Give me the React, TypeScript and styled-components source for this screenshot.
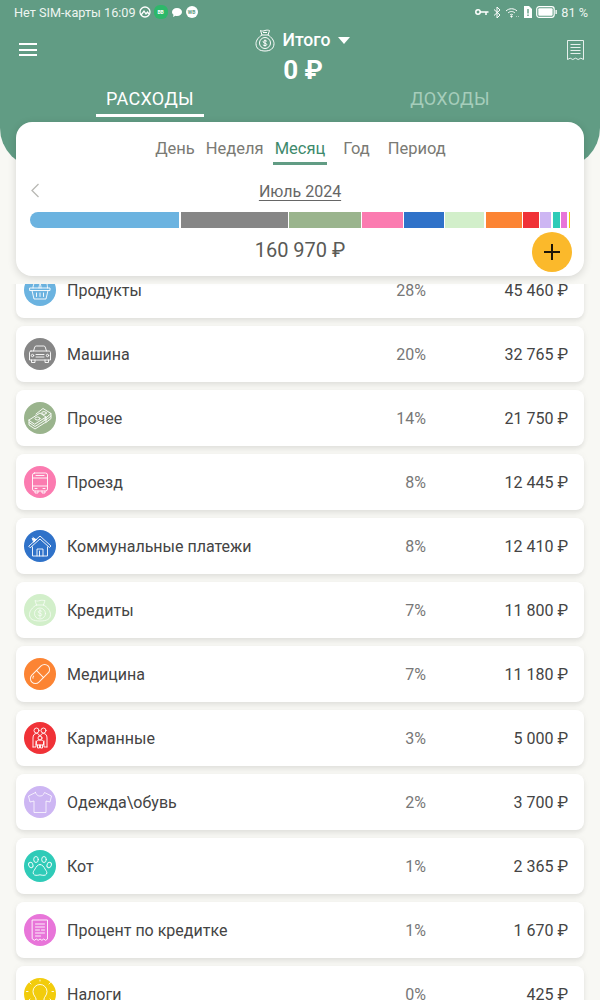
import React from "react";
import styled, { createGlobalStyle } from "styled-components";

const Global = createGlobalStyle`
  html, body { margin: 0; padding: 0; background: #f8f8f4; }
  * { box-sizing: border-box; }
  body { font-family: Roboto, "Noto Sans", sans-serif; }
`;

const Page = styled.div`
  width: 600px; height: 1000px; overflow: hidden; display: flex; flex-direction: column;
  background: #f8f8f4; color: #444;
`;
const Header = styled.header`
  height: 168px; flex: none; background: #619c84; color: #fff;
  border-radius: 0 0 40px 40px; display: flex; flex-direction: column;
`;
const StatusBar = styled.div`
  height: 24px; padding: 0 12px 0 14px; display: flex; align-items: center; justify-content: space-between;
  font-size: 12.7px; color: #eef5f1;
`;
const StatusGroup = styled.div<{ $gap: number }>`
  display: flex; align-items: center; gap: ${p => p.$gap}px; white-space: nowrap;
`;
const Pill = styled.span<{ $bg: string; $w: number; $h: number; $color: string }>`
  width: ${p => p.$w}px; height: ${p => p.$h}px; border-radius: 6px; background: ${p => p.$bg}; color: ${p => p.$color};
  font-size: 5px; font-weight: 700; display: inline-flex; align-items: center; justify-content: center;
`;
const TopRow = styled.div`
  display: flex; justify-content: space-between; align-items: flex-start; padding: 2px 16px 0 19px; height: 60px;
`;
const MenuBtn = styled.div`
  width: 18px; margin-top: 17px; display: flex; flex-direction: column; gap: 3.5px;
`;
const MenuLine = styled.span`
  display: block; height: 2px; background: #fff;
`;
const Center = styled.div`
  display: flex; flex-direction: column; align-items: center; margin-left: 1px;
`;
const TitleRow = styled.div`
  display: flex; align-items: center; height: 27px; gap: 7px; font-size: 17.6px; font-weight: 500;
`;
const Caret = styled.span`
  width: 0; height: 0; border-left: 6px solid transparent; border-right: 6px solid transparent; border-top: 7px solid #fff; margin-top: 1px;
`;
const Balance = styled.div`
  font-size: 26px; font-weight: 700; height: 33px; line-height: 34px; margin-left: 1px;
`;
const Tabs = styled.div`
  display: grid; grid-template-columns: 1fr 1fr; height: 34px; margin-top: -1px;
`;
const Tab = styled.div<{ $on?: boolean }>`
  justify-self: center; width: 108px; height: 34px; padding-top: 4px; text-align: center; font-size: 18px; line-height: 24px;
  color: ${p => (p.$on ? "#fff" : "#a6cdbb")}; letter-spacing: .3px;
  border-bottom: 3px solid ${p => (p.$on ? "#fff" : "transparent")};
`;

const Card = styled.section`
  position: relative; flex: none; height: 154px; margin: -46px 16px 0; background: #fff; border-radius: 16px;
  box-shadow: 0 2px 8px rgba(0,0,0,.14); padding-top: 15px; display: flex; flex-direction: column; align-items: stretch; z-index: 2;
`;
const Periods = styled.div`
  display: flex; justify-content: center; height: 28px; padding-left: 1px;
`;
const Period = styled.div<{ $on?: boolean; $m: number }>`
  font-size: 16.5px; line-height: 24px; padding: 0 2px; margin-left: ${p => p.$m}px;
  color: ${p => (p.$on ? "#3e8a6c" : "#7a7a74")};
  border-bottom: 3px solid ${p => (p.$on ? "#619c84" : "transparent")};
`;
const DateRow = styled.div`
  display: flex; align-items: center; justify-content: center; position: relative; height: 24px; margin-top: 14px;
`;
const Chevron = styled.svg`
  position: absolute; left: 15px; top: 4px;
`;
const DateText = styled.span`
  font-size: 16px; color: #666; text-decoration: underline; text-underline-offset: 3px; text-decoration-thickness: 1px;
`;
const Bar = styled.div`
  display: flex; gap: 1.2px; height: 16px; margin: 9px 14px 0; border-radius: 8px 0 0 8px; overflow: hidden;
`;
const Seg = styled.div<{ $c: string; $g: number }>`
  flex: ${p => p.$g} 0 0; background: ${p => p.$c};
`;
const Total = styled.div`
  text-align: center; font-size: 20px; line-height: 24px; color: #5a5a56; margin-top: 10px;
`;
const Fab = styled.div`
  position: absolute; right: 12px; bottom: 4px; width: 40px; height: 40px; border-radius: 50%; background: #fbb92b;
  display: flex; align-items: center; justify-content: center;
`;
const ListViewport = styled.div`
  flex: 1; margin-top: 8px; overflow: hidden; padding: 0 16px;
`;
const List = styled.div`
  margin-top: -22px; display: flex; flex-direction: column; gap: 8px;
`;
const Row = styled.div`
  flex: none; height: 56px; background: #fff; border-radius: 8px; box-shadow: 0 3px 4px rgba(0,0,0,.08), 0 0 8px rgba(0,0,0,.03);
  display: flex; align-items: center; padding: 0 16px 0 8px; font-size: 16px; color: #444;
`;
const Badge = styled.div<{ $bg: string }>`
  width: 32px; height: 32px; flex: none; border-radius: 50%; background: ${p => p.$bg};
`;
const Name = styled.div`
  flex: 1; margin-left: 11px; white-space: nowrap;
`;
const Pct = styled.div`
  color: #777; text-align: right;
`;
const AmountCell = styled.div`
  width: 142px; text-align: right; white-space: nowrap;
`;
const Line = styled.svg`
  display: block;
`;

const G: React.FC<{ children: React.ReactNode; o?: number }> = ({ children, o = 0.9 }) => (
  <Line width="32" height="32" viewBox="0 0 32 32" fill="none" stroke="#fff" strokeOpacity={o} strokeWidth="1" strokeLinecap="round" strokeLinejoin="round">
    {children}
  </Line>
);

const icons: Record<string, React.ReactNode> = {
  basket: <G><path d="M6 14h20v2.500H6zM8 16.500l2 8.500h12l2-8.500M12.500 19v3.500M16 19v3.500M19.500 19v3.500M9 14c0-5 3-7 4.500-7S17 9 17 14M15 14c0-4 2.500-7 5-7s3.500 3 3.500 7" /></G>,
  car: <G><path d="M9.500 13l1.300-4c.2-.6.7-1 1.400-1h7.600c.7 0 1.200.4 1.400 1l1.300 4M7 13h18c.8 0 1.500.7 1.500 1.500V22h-21v-7.500C5.500 13.700 6.200 13 7 13zM7.500 22v2.500h3.500V22M21 22v2.500h3.500V22M12 16.500h8M12 19h8" /><circle cx="8.500" cy="17.500" r="1.200" /><circle cx="23.500" cy="17.500" r="1.200" /></G>,
  money: <G><path d="M5 18l11-7 6 4-11 7zM5 18v2.500l6 4 11-7V15M5 20.500v2.500l6 4 11-7v-2.500M12 12l7-5.500 8 5-7 6M27 11.500v2.500l-5 4M27 14v2.500l-5 4" /><ellipse cx="13.500" cy="16.500" rx="2.500" ry="1.500" /><ellipse cx="20" cy="11" rx="2.300" ry="1.400" /></G>,
  bus: <G><rect x="8.500" y="7" width="15" height="18" rx="2" /><path d="M8.500 12h15M8.500 20h15M12 9.500h8M11 25v2h3v-2M18 25v2h3v-2M11 22.500h2M19 22.500h2" /></G>,
  house: <G><path d="M5 16L16 6l11 10-1.500 1.500L16 9 6.500 17.500zM8.500 17v9h15v-9M13 26v-7h6v7M15.500 26v-5" /><path d="M8.500 8.500l4 1-2.500 2.500z" fill="#fff" /><path d="M10 12l3-3M9 7.500l2 1.500" /></G>,
  bag: <G o={0.65}><path d="M12.500 11c-4 2-7 6-7 9.500C5.500 25 9 27 16 27s10.500-2 10.500-6.500c0-3.500-3-7.500-7-9.500M12.500 11h7M12.500 11L11 6.500c2 1 3 .5 5 0s3 0 5 0L19.500 11" /><circle cx="16" cy="19.500" r="5.500" /><path d="M18 17.500c-.5-1-3.500-1.300-3.800.3-.3 1.800 3.800 1 3.600 3-.2 1.500-3.200 1.300-3.900 0M16 15.500v8" /></G>,
  pill: <G><g transform="rotate(-45 16 16)"><rect x="4.500" y="11" width="23" height="10" rx="5" /><path d="M16 11v10M8 14c.5-.8 1-1 2-1" /></g></G>,
  family: <G><circle cx="12.500" cy="8.500" r="2.500" /><circle cx="19.500" cy="8.500" r="2.500" /><circle cx="16" cy="16" r="2" /><path d="M9 25v-9c0-3 1.500-4.500 3.500-4.500S15 12.500 15.500 14M23 25v-9c0-3-1.500-4.500-3.500-4.500S17 12.500 16.500 14M12.500 19.500c0-1 1.500-1.500 3.500-1.500s3.500.5 3.500 1.500V23h-7zM13.500 23v3h2v-3M16.500 23v3h2v-3M9 25h3V19M23 25h-3v-6" /></G>,
  shirt: <G o={0.75}><path d="M11.500 6.500L4.500 10l1.500 6 4-1v11.500h12V15l4 1 1.500-6-7-3.500c-1 3-3 3.500-4.500 3.500s-3.500-.5-4.500-3.500z" /></G>,
  paw: <G><ellipse cx="12" cy="9.500" rx="2.300" ry="3" /><ellipse cx="20" cy="9.500" rx="2.300" ry="3" /><ellipse cx="6.800" cy="15" rx="2.100" ry="2.700" transform="rotate(-25 6.800 15)" /><ellipse cx="25.200" cy="15" rx="2.100" ry="2.700" transform="rotate(25 25.200 15)" /><path d="M16 14.500c-2.500 0-4 2.500-5 4.500-1.200 2-2.500 3.200-1.500 5 1 1.800 3.500 1.500 6.500.8 3 .7 5.500 1 6.500-.8 1-1.800-.3-3-1.500-5-1-2-2.500-4.500-5-4.500z" /></G>,
  receipt: <G><path d="M8.500 6h15v19l-1.900 1.300-1.900-1.300-1.800 1.300-1.900-1.300-1.800 1.300-1.900-1.300-1.900 1.300-1.900-1.300z" /><path d="M11.500 10h9M11.500 13h9M11.500 16h4M17.500 16h3M11.500 19h9M11.500 22h5" /></G>,
  bulb: <G><path d="M12 23v-2c0-2-3-3.500-3-7.500a7 7 0 0 1 14 0c0 4-3 5.500-3 7.500v2zM13 26h6M16 3v-1M7 6L5.500 4.500M25 6l1.500-1.500M4 13.500H2.500M28 13.500h1.500M6 21l-1.500 1.500M26 21l1.500 1.500" /></G>,
};

const rows = [
  ["Продукты", "28%", "45 460 ₽", "#6bb3e0", "basket"],
  ["Машина", "20%", "32 765 ₽", "#868686", "car"],
  ["Прочее", "14%", "21 750 ₽", "#9ab48d", "money"],
  ["Проезд", "8%", "12 445 ₽", "#fb7bb0", "bus"],
  ["Коммунальные платежи", "8%", "12 410 ₽", "#2f72c9", "house"],
  ["Кредиты", "7%", "11 800 ₽", "#d2efca", "bag"],
  ["Медицина", "7%", "11 180 ₽", "#fc8433", "pill"],
  ["Карманные", "3%", "5 000 ₽", "#f03237", "family"],
  ["Одежда\\обувь", "2%", "3 700 ₽", "#cdb6f3", "shirt"],
  ["Кот", "1%", "2 365 ₽", "#2fcbb8", "paw"],
  ["Процент по кредитке", "1%", "1 670 ₽", "#e875d9", "receipt"],
  ["Налоги", "0%", "425 ₽", "#f2cc0c", "bulb"],
];

const segs: [string, number][] = [
  ["#6bb3e0", 149.5], ["#868686", 107.5], ["#9ab48d", 71.5], ["#fb7bb0", 40.5], ["#2f72c9", 40.5], ["#d2efca", 39],
  ["#fc8433", 36], ["#f03237", 16.5], ["#cdb6f3", 11], ["#2fcbb8", 7.5], ["#e875d9", 6], ["#f2cc0c", 1.5],
];

export default function App() {
  return (
    <Page>
      <Global />
      <Header>
        <StatusBar>
          <StatusGroup $gap={3}>
            <span>Нет SIM-карты 16:09</span>
            <svg width="12" height="12" viewBox="0 0 12 12" fill="none" stroke="#fff" strokeWidth="1.300"><circle cx="6" cy="6" r="5" /><path d="M2 9l3-4 2 3 1.500-2 1.500 2" /></svg>
            <Pill $bg="#2db86a" $w={14} $h={14} $color="#fff">BB</Pill>
            <svg width="12" height="11" viewBox="0 0 12 11"><path d="M6 1c3 0 5 1.800 5 4S9 9 6 9c-.6 0-1 0-1.500-.2L2 10l.5-2.200C1.500 7 1 6 1 5c0-2.200 2-4 5-4z" fill="#fff" /></svg>
            <Pill $bg="#fff" $w={12} $h={12} $color="#619c84">WB</Pill>
          </StatusGroup>
          <StatusGroup $gap={4}>
            <svg width="14" height="8" viewBox="0 0 14 8" fill="none" stroke="#fff" strokeWidth="1.500"><circle cx="3" cy="4" r="2.200" /><path d="M5 4h8.500M11 4v3" /></svg>
            <svg width="8" height="13" viewBox="0 0 8 13" fill="none" stroke="#fff" strokeWidth="1"><path d="M1 3.500l6 5.500-3 3V1l3 3-6 5.500" /></svg>
            <svg width="14" height="11" viewBox="0 0 14 11" fill="none" stroke="#fff" strokeWidth="1"><path d="M1 4c3-3 8-3 11 0M3 6c2-2 5-2 7 0M5 8c1-1 2-1 3 0" /><circle cx="6.500" cy="9.500" r=".7" fill="#fff" /><path d="M11 9.500h.5M13 9.500h.5" /></svg>
            <svg width="9" height="12" viewBox="0 0 9 12"><path d="M1 0h5l3 3v9H1z" fill="#fff" /><rect x="4.300" y="3" width="1.400" height="4.500" fill="#619c84" /><rect x="4.300" y="8.500" width="1.400" height="1.500" fill="#619c84" /></svg>
            <svg width="21" height="12" viewBox="0 0 21 12" fill="none"><rect x=".7" y=".7" width="17.500" height="10.600" rx="2.500" stroke="#fff" strokeWidth="1.200" /><rect x="2.300" y="2.300" width="14.300" height="7.400" rx="1" fill="#fff" /><rect x="19.500" y="4" width="1.300" height="4" fill="#fff" /></svg>
            <span>81 %</span>
          </StatusGroup>
        </StatusBar>
        <TopRow>
          <MenuBtn><MenuLine /><MenuLine /><MenuLine /></MenuBtn>
          <Center>
            <TitleRow>
              <svg width="20" height="24" viewBox="0 0 20 24" fill="none" stroke="#fff" strokeWidth="1"><path d="M7 7C3.500 9 1 12.500 1 15.500 1 20.500 4.500 23 10 23s9-2.500 9-7.500C19 12.500 16.500 9 13 7M7 7h6M7 7L5.500 2.500c1.800 1 3 .5 4.500 0s3-.5 4.500 0L13 7M8 4.500h4" /><circle cx="10" cy="15" r="5.500" /><path d="M12 13.500c-.5-1-3.500-1.300-3.900.2-.3 1.800 3.900 1 3.700 3-.2 1.400-3.200 1.200-3.900 0M10 11.500v7" /></svg>
              <span>Итого</span>
              <Caret />
            </TitleRow>
            <Balance>0 ₽</Balance>
          </Center>
          <svg width="17" height="21" viewBox="0 0 17 21" fill="none" stroke="#fff" strokeOpacity=".85" strokeWidth="1" style={{ marginTop: 14 }}><path d="M.5.500h16v19l-2.700-1.300-2.600 1.300-2.700-1.300-2.700 1.300-2.600-1.300L.5 19.500z" /><path d="M3.500 4.500h10M3.500 7.500h10M3.500 10.500h10M3.500 13.500h10" /></svg>
        </TopRow>
        <Tabs>
          <Tab $on>РАСХОДЫ</Tab>
          <Tab>ДОХОДЫ</Tab>
        </Tabs>
      </Header>
      <Card>
        <Periods>
          <Period $m={0}>День</Period>
          <Period $m={7}>Неделя</Period>
          <Period $on $m={7}>Месяц</Period>
          <Period $m={14}>Год</Period>
          <Period $m={14}>Период</Period>
        </Periods>
        <DateRow>
          <Chevron width="9" height="15" viewBox="0 0 9 15" fill="none" stroke="#b9b9b5" strokeWidth="1.300"><path d="M7.500 1L1 7.500 7.500 14" /></Chevron>
          <DateText>Июль 2024</DateText>
        </DateRow>
        <Bar>
          {segs.map(([c, g], i) => <Seg key={i} $c={c} $g={g} />)}
        </Bar>
        <Total>160 970 ₽</Total>
        <Fab>
          <svg width="18" height="18" viewBox="0 0 18 18" stroke="#1c1408" strokeWidth="2"><path d="M9 1v16M1 9h16" /></svg>
        </Fab>
      </Card>
      <ListViewport>
        <List>
          {rows.map(([name, pct, amount, color, icon]) => (
            <Row key={name}>
              <Badge $bg={color}>{icons[icon]}</Badge>
              <Name>{name}</Name>
              <Pct>{pct}</Pct>
              <AmountCell>{amount}</AmountCell>
            </Row>
          ))}
        </List>
      </ListViewport>
    </Page>
  );
}
